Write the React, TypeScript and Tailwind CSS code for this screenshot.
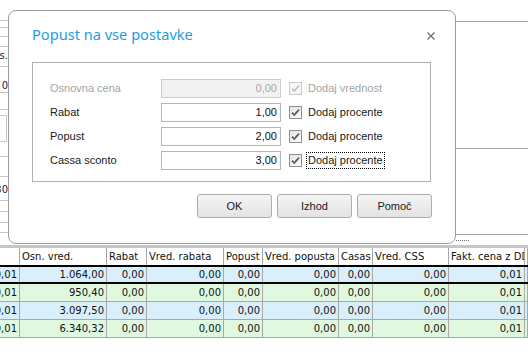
import React from 'react';

const leftRows = [
  { h: 21 },
  { h: 7 },
  { h: 9 },
  { h: 10 },
  { h: 20, text: 'os.', ty: 'pt-[1px]' },
  { h: 26, text: '0', ty: 'pt-[11px]' },
  { h: 17 },
  { h: 47, box: true },
  { h: 20 },
  { h: 24, text: '30', ty: 'pt-[5px]' },
  { h: 11 },
  { h: 11 },
  { h: 10 },
];

const cols = [
  { w: 'w-[20px]', head: '' },
  { w: 'w-[87px]', head: 'Osn. vred.' },
  { w: 'w-[40px]', head: 'Rabat' },
  { w: 'w-[77px]', head: 'Vred. rabata' },
  { w: 'w-[39px]', head: 'Popust' },
  { w: 'w-[76px]', head: 'Vred. popusta' },
  { w: 'w-[34px]', head: 'Casas' },
  { w: 'w-[76px]', head: 'Vred. CSS' },
  { w: 'w-[76px]', head: 'Fakt. cena z DDV' },
  { w: 'flex-1', head: '' },
];

const rows = [
  { bg: 'bg-[#d9effc]', osn: '1.064,00', line: 'h-[17px] border-b-2 border-b-black' },
  { bg: 'bg-[#dff8df]', osn: '950,40', line: 'h-[18px] border-b border-b-[#a8a8a8]' },
  { bg: 'bg-[#d9effc]', osn: '3.097,50', line: 'h-[18px] border-b border-b-[#a8a8a8]' },
  { bg: 'bg-[#dff8df]', osn: '6.340,32', line: 'h-[18px] border-b border-b-[#a8a8a8]' },
];

function Check({ disabled }: { disabled?: boolean }) {
  return (
    <div
      className={`w-[13px] h-[13px] border flex items-center justify-center ${
        disabled ? 'border-[#c8c8c8] bg-[#f7f7f7]' : 'border-[#8e8f8f] bg-gradient-to-br from-[#e4e4e4] to-[#fbfbfb]'
      }`}
    >
      <svg width="11" height="11" viewBox="0 0 11 11">
        <path
          d="M2 5.6 L4.3 8 L9 2.6"
          fill="none"
          stroke={disabled ? '#c0c0c0' : '#5a5a5a'}
          strokeWidth="1.6"
        />
      </svg>
    </div>
  );
}

function Field({ label, value, check, disabled, focus }: { label: string; value: string; check: string; disabled?: boolean; focus?: boolean }) {
  return (
    <div className="flex items-center h-[19px]">
      <div className={`w-[111px] ${disabled ? 'text-[#a3a3a3]' : 'text-[#1a1a1a]'}`}>{label}</div>
      <div
        className={`w-[120px] h-[19px] border flex items-center justify-end pr-[3px] ${
          disabled ? 'border-[#cccccc] bg-[#f2f2f2] text-[#a8a8a8]' : 'border-[#b5b5b5] bg-white text-[#111]'
        }`}
      >
        {value}
      </div>
      <div className="ml-[8px]">
        <Check disabled={disabled} />
      </div>
      <div
        className={`ml-[4px] px-[1px] leading-[15px] border ${
          focus ? 'border-dotted border-black' : 'border-transparent'
        } ${disabled ? 'text-[#a3a3a3]' : 'text-[#1a1a1a]'}`}
      >
        {check}
      </div>
    </div>
  );
}

function Btn({ children }: { children: React.ReactNode }) {
  return (
    <button className="w-[75px] h-[24px] rounded-[3px] border border-[#adadad] bg-gradient-to-b from-[#f4f4f4] to-[#e3e3e3] font-normal text-[11px] text-[#1a1a1a]">
      {children}
    </button>
  );
}

export default function App() {
  return (
    <div className="w-[528px] h-[360px] bg-white relative overflow-hidden font-['Liberation_Sans',Arial,sans-serif] text-[11px]">
      <div className="flex h-[245px]">
        <div className="w-[456px] flex flex-col">
          {leftRows.map((r, i) => (
            <div
              key={i}
              style={{ height: r.h }}
              className="border-b border-[#c4c4c4] font-['DejaVu_Sans',sans-serif] text-[10px] text-[#1c1c3a]"
            >
              {r.text && (
                <div className={`w-[8px] flex justify-end overflow-hidden whitespace-nowrap ${r.ty}`}>{r.text}</div>
              )}
              {r.box && <div className="mt-[5px] w-[7px] h-[27px] border border-l-0 border-[#c8c8c8]" />}
            </div>
          ))}
        </div>
        <div className="flex-1 flex flex-col">
          <div className="h-[22px] border-b border-[#a8a8a8]" />
          <div className="h-[127px] border-b border-[#a8a8a8]" />
          <div className="h-[86px] border-b border-[#a8a8a8]" />
          <div className="mt-[5px] w-[13px] border-t border-dotted border-[#707070]" />
        </div>
      </div>

      <div className="border-t-[3px] border-[#c6c6c6] font-['DejaVu_Sans',sans-serif] text-[10px] text-[#111]">
        <div className="flex h-[19px] border-b-2 border-black bg-white">
          {cols.map((c, i) => (
            <div
              key={i}
              className={`${c.w} shrink-0 border-r border-[#a8a8a8] pl-[2px] leading-[17px] overflow-hidden whitespace-nowrap`}
            >
              {c.head}
            </div>
          ))}
        </div>
        {rows.map((r, ri) => (
          <div key={ri} className={`flex ${r.bg} ${r.line}`}>
            {cols.map((c, i) => {
              const v =
                i === 0 ? '0,01' : i === 1 ? r.osn : i === 8 ? '0,01' : i === 9 ? '' : '0,00';
              return (
                <div
                  key={i}
                  className={`${c.w} shrink-0 border-r border-[#a8a8a8] pr-[2px] flex justify-end items-center overflow-hidden whitespace-nowrap`}
                >
                  {v}
                </div>
              );
            })}
          </div>
        ))}
      </div>

      <div className="absolute left-[8px] top-[10px] w-[448px] h-[234px] rounded-[8px] border border-[#9c9c9c] bg-white pl-[23px] pr-[24px] pt-[12px]">
        <div className="flex justify-between items-start h-[23px]">
          <div className="font-['Noto_Sans',sans-serif] text-[14.6px] leading-[23px] text-[#1e9de4]">
            Popust na vse postavke
          </div>
          <svg width="8" height="8" viewBox="0 0 8 8" className="mt-[9px] mr-[-4px]">
            <path d="M0.5 0.5 L7.5 7.5 M7.5 0.5 L0.5 7.5" stroke="#6e6e6e" strokeWidth="1.3" />
          </svg>
        </div>
        <div className="mt-[16px] w-[399px] h-[120px] border border-[#b0b0b0] pl-[17px] pt-[16px] flex flex-col gap-[5px]">
          <Field label="Osnovna cena" value="0,00" check="Dodaj vrednost" disabled />
          <Field label="Rabat" value="1,00" check="Dodaj procente" />
          <Field label="Popust" value="2,00" check="Dodaj procente" />
          <Field label="Cassa sconto" value="3,00" check="Dodaj procente" focus />
        </div>
        <div className="mt-[12px] flex justify-end gap-[5px] mr-[-1px]">
          <Btn>OK</Btn>
          <Btn>Izhod</Btn>
          <Btn>Pomoč</Btn>
        </div>
      </div>
    </div>
  );
}
